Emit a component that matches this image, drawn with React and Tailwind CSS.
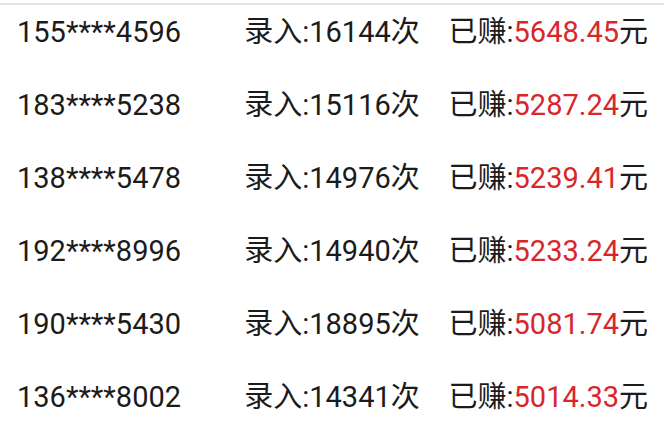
import React from 'react';

const rows = [
  { phone: '155****4596', count: '16144', earned: '5648.45' },
  { phone: '183****5238', count: '15116', earned: '5287.24' },
  { phone: '138****5478', count: '14976', earned: '5239.41' },
  { phone: '192****8996', count: '14940', earned: '5233.24' },
  { phone: '190****5430', count: '18895', earned: '5081.74' },
  { phone: '136****8002', count: '14341', earned: '5014.33' },
];

export default function App() {
  return (
    <div
      className="w-[664px] h-[440px] bg-white overflow-hidden text-[#1b1b1b]"
      style={{ fontFamily: 'Roboto, "Noto Sans CJK SC", sans-serif' }}
    >
      <div className="h-[3px]" />
      <div className="h-[2px] bg-[#e4e4e4]" />

      {/* leaderboard rows */}
      <div className="flex flex-col gap-[33px] pt-[7px] px-[16px]">
        {rows.map((r) => (
          <div key={r.phone} className="grid grid-cols-3 items-center h-[40px] text-[29px] leading-[40px] whitespace-nowrap">
            <span className="pl-[1px]">{r.phone}</span>
            <span className="text-center">录入:{r.count}次</span>
            <span className="text-right">
              已赚:<span className="text-[#d8272b]">{r.earned}</span>元
            </span>
          </div>
        ))}
      </div>
    </div>
  );
}
